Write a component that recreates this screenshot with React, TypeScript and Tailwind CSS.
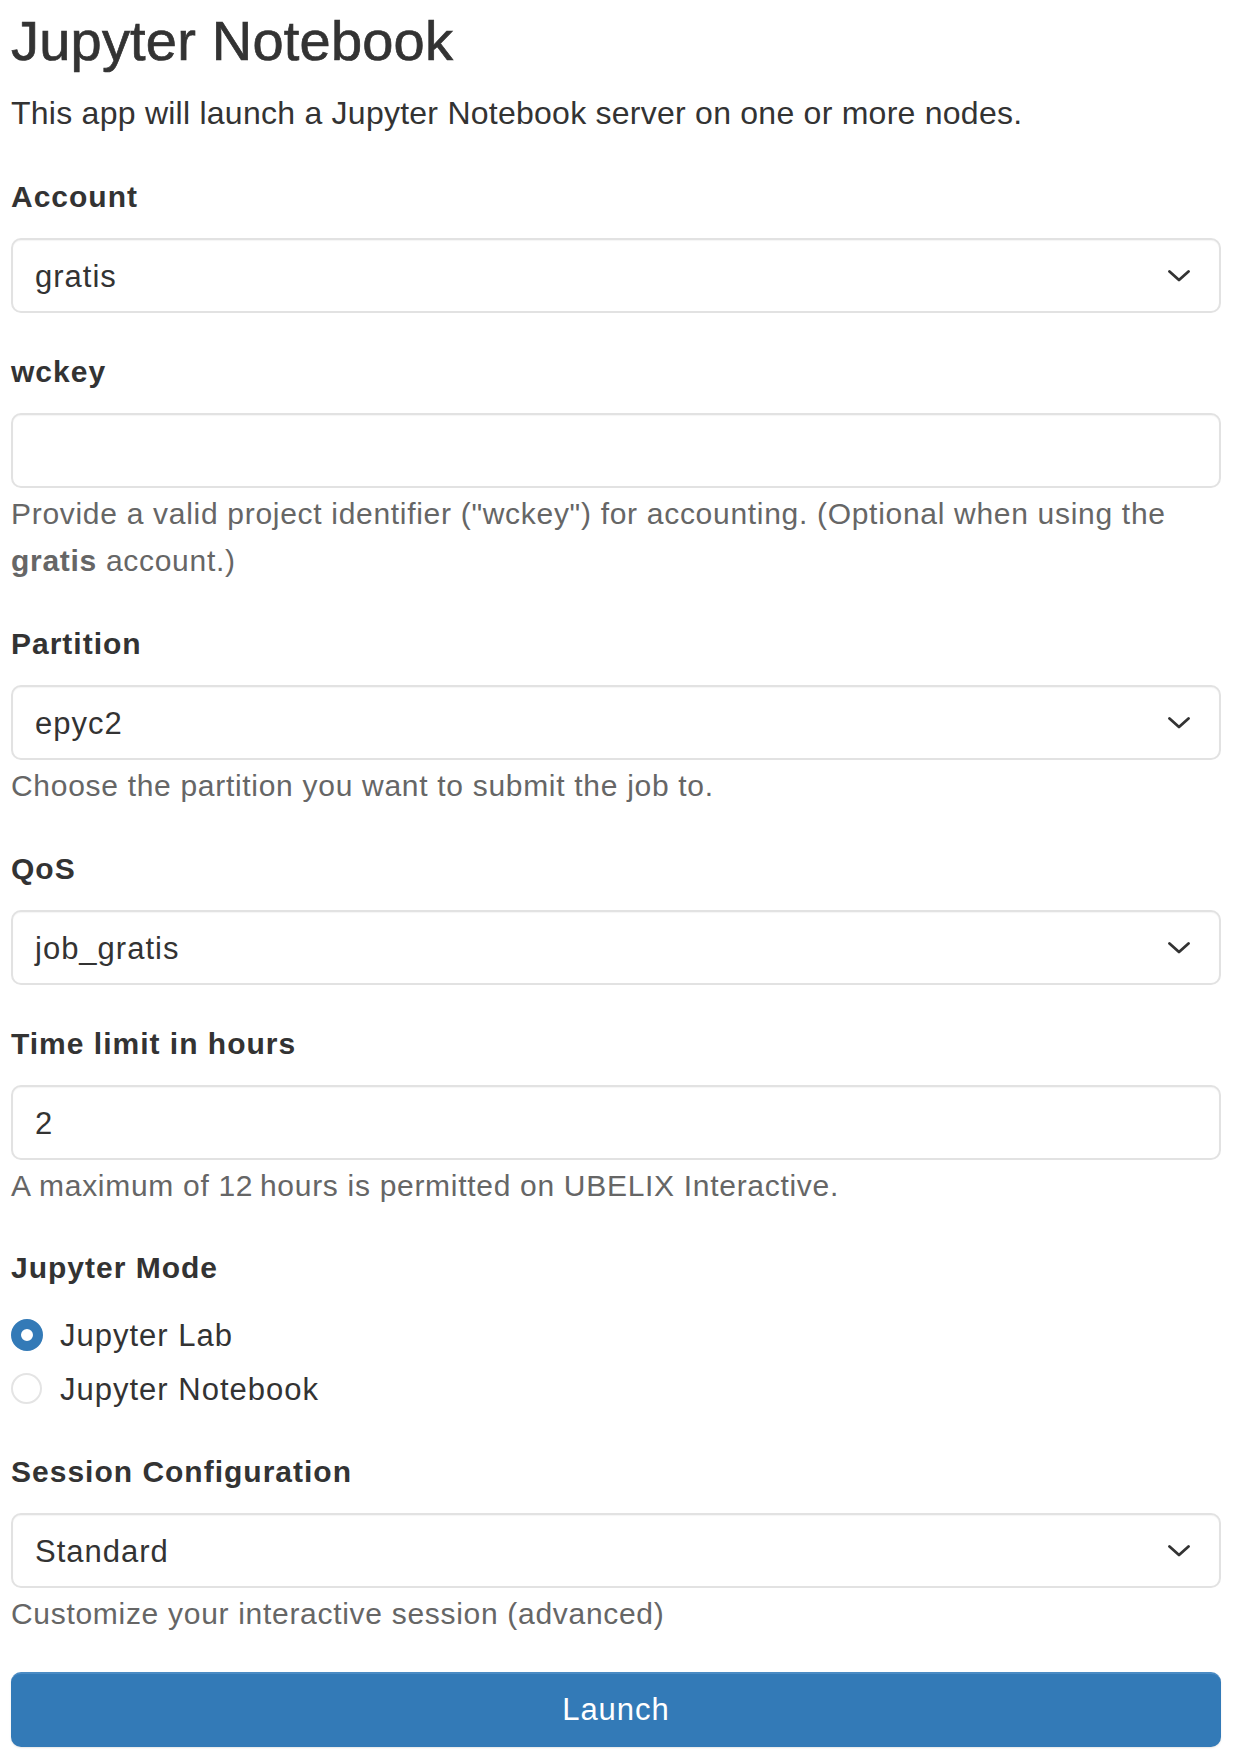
import React, { useState } from "react";

const font = { fontFamily: '"Liberation Sans", Arial, Helvetica, sans-serif' };

const Chevron = () => (
  <svg width="22" height="12" viewBox="0 0 22 12" fill="none" className="shrink-0">
    <polyline
      points="1.5,1.5 11,10 20.5,1.5"
      stroke="#333"
      strokeWidth="2.8"
      strokeLinecap="round"
      strokeLinejoin="round"
    />
  </svg>
);

const Label = ({ children }: { children: React.ReactNode }) => (
  <div className="text-[30px] leading-[47px] font-bold tracking-[1px] text-[#333]">{children}</div>
);

const Help = ({ children }: { children: React.ReactNode }) => (
  <div className="mt-[2px] text-[30px] leading-[47px] tracking-[0.7px] text-[#666]">{children}</div>
);

const boxClass =
  "mt-[18px] h-[75px] w-full rounded-[10px] border-2 border-[#e2e2e2] bg-white flex items-center pt-[4px] pl-[22px] pr-[29px] text-[31px] tracking-[1px] text-[#333] shadow-[inset_0_1px_1px_rgba(0,0,0,0.04)]";

const Select = ({ value }: { value: string }) => (
  <div className={boxClass}>
    <span className="flex-1">{value}</span>
    <span className="-mt-[4px] flex">
      <Chevron />
    </span>
  </div>
);

const Input = ({ value }: { value?: string }) => (
  <div className={boxClass}>
    <span className="flex-1">{value}</span>
  </div>
);

const Radio = ({
  checked,
  label,
  onClick,
}: {
  checked: boolean;
  label: string;
  onClick: () => void;
}) => (
  <button onClick={onClick} className="flex items-center h-[47px] text-left">
    <span className="w-[49px] flex items-center">
      {checked ? (
        <span className="block size-[32px] rounded-full border-[10px] border-[#337ab7] bg-white" />
      ) : (
        <span className="block size-[31px] rounded-full border-2 border-[#e4e4e4] bg-white" />
      )}
    </span>
    <span className="pt-[3px] text-[31px] tracking-[1px] text-[#333]">{label}</span>
  </button>
);

export default function App() {
  const [mode, setMode] = useState("lab");

  return (
    <div className="min-h-[1764px] bg-white" style={font}>
      <div className="ml-[11px] w-[1210px] pt-[10px]">
        <h1 className="text-[56px] leading-[62px] text-[#333] tracking-[0.2px] [-webkit-text-stroke:0.7px_#333]">
          Jupyter Notebook
        </h1>
        <p className="mt-[18px] text-[32px] leading-[47px] tracking-[0.25px] text-[#333]">
          This app will launch a Jupyter Notebook server on one or more nodes.
        </p>

        <div className="mt-[36px]">
          <Label>Account</Label>
          <Select value="gratis" />
        </div>

        <div className="mt-[35px]">
          <Label>wckey</Label>
          <Input />
          <Help>
            Provide a valid project identifier ("wckey") for accounting. (Optional when using the{" "}
            <strong className="font-bold">gratis</strong> account.)
          </Help>
        </div>

        <div className="mt-[36px]">
          <Label>Partition</Label>
          <Select value="epyc2" />
          <Help>Choose the partition you want to submit the job to.</Help>
        </div>

        <div className="mt-[36px]">
          <Label>QoS</Label>
          <Select value="job_gratis" />
        </div>

        <div className="mt-[35px]">
          <Label>Time limit in hours</Label>
          <Input value="2" />
          <Help>A maximum of 12{"\u2009"}hours is permitted on UBELIX Interactive.</Help>
        </div>

        <div className="mt-[35px]">
          <Label>Jupyter Mode</Label>
          <div className="mt-[20px] flex flex-col gap-[7px]">
            <Radio checked={mode === "lab"} label="Jupyter Lab" onClick={() => setMode("lab")} />
            <Radio
              checked={mode === "notebook"}
              label="Jupyter Notebook"
              onClick={() => setMode("notebook")}
            />
          </div>
        </div>

        <div className="mt-[36px]">
          <Label>Session Configuration</Label>
          <Select value="Standard" />
          <Help>Customize your interactive session (advanced)</Help>
        </div>

        <button className="mt-[35px] h-[75px] w-full rounded-[10px] bg-[#337ab7] border-t-2 border-[#4a8bc4] text-white text-[31px] tracking-[1px] shadow-[0_1px_2px_rgba(0,0,0,0.1)]">
          Launch
        </button>
      </div>
    </div>
  );
}
